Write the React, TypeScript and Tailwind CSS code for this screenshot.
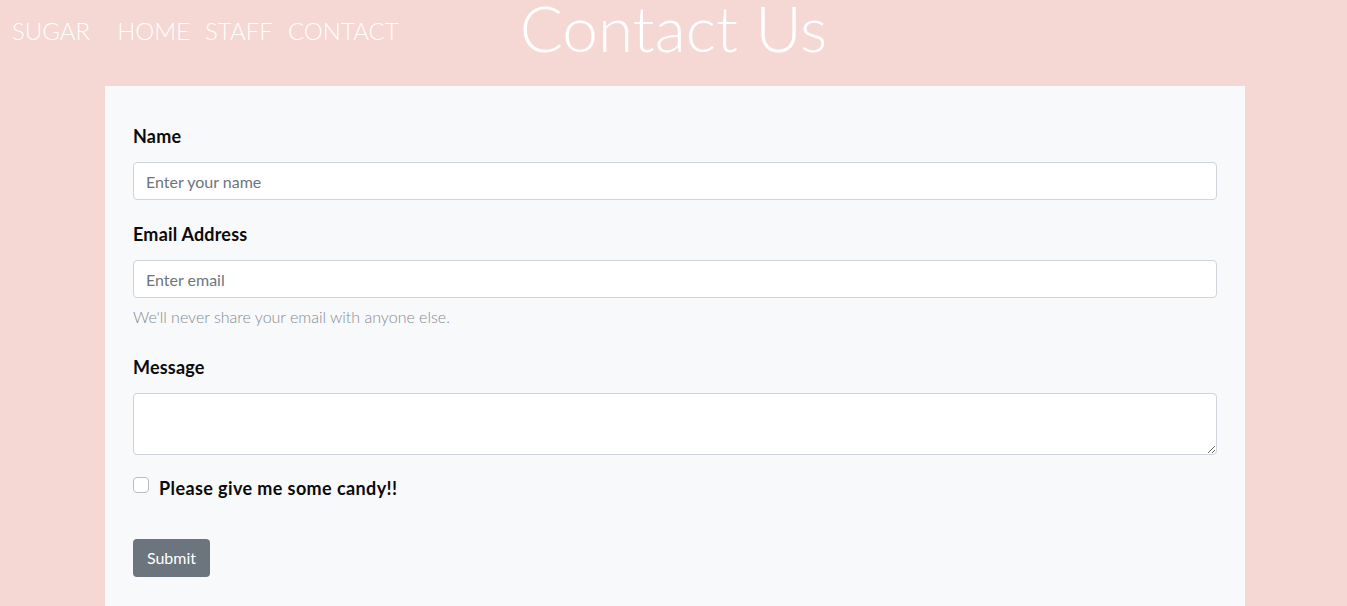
import React from 'react'

const navLinks = ["HOME", "STAFF", "CONTACT"]

const App = () => {
    return (
        <div className="min-h-screen bg-[#f5d7d4] font-['Lato','Noto_Sans',sans-serif]">
            {/* header */}
            <div className="grid h-[86px] grid-cols-[1fr_auto_1fr]">
                <div className="flex items-start gap-[15px] pl-3 pt-[15px] text-[24px] font-light leading-[32px] text-white">
                    <span className="mr-3">SUGAR</span>
                    {navLinks.map((link) => (
                        <a key={link} href="#">{link}</a>
                    ))}
                </div>
                <h1 className="text-[64px] font-light leading-[56px] text-white">Contact Us</h1>
                <div></div>
            </div>

            {/* form card */}
            <div className="ml-[105px] w-[1140px] bg-[#f8f9fa] px-7 pt-[38px] pb-10">
                <form className="flex flex-col">
                    <label className="mb-[14px] text-[18px] font-bold leading-6 tracking-[0.2px] text-[#0b0b0b]">Name</label>
                    <input
                        type="text"
                        placeholder="Enter your name"
                        className="h-[38px] w-full rounded border border-[#ced4da] bg-white px-3 text-[16px] text-[#212529] placeholder:text-[#6c757d] outline-none"
                    />

                    <label className="mt-[22px] mb-[14px] text-[18px] font-bold leading-6 tracking-[0.2px] text-[#0b0b0b]">Email Address</label>
                    <input
                        type="email"
                        placeholder="Enter email"
                        className="h-[38px] w-full rounded border border-[#ced4da] bg-white px-3 text-[16px] text-[#212529] placeholder:text-[#6c757d] outline-none"
                    />
                    <p className="mt-[8px] text-[16px] font-light leading-[21px] text-[#858b92]">We'll never share your email with anyone else.</p>

                    <label className="mt-[28px] mb-[14px] text-[18px] font-bold leading-6 tracking-[0.2px] text-[#0b0b0b]">Message</label>
                    <textarea
                        rows={2}
                        className="h-[62px] w-full rounded border border-[#ced4da] bg-white px-3 py-1.5 text-[16px] outline-none"
                    />

                    <div className="mt-[22px] flex items-start gap-[10px]">
                        <input type="checkbox" className="mt-0 h-4 w-4 appearance-none rounded-[4px] border border-[#b9bec3] bg-white" />
                        <span className="-mt-[1px] text-[18px] font-bold leading-6 tracking-[0.4px] text-[#0b0b0b]">Please give me some candy!!</span>
                    </div>

                    <div className="mt-[39px]">
                        <button type="button" className="h-[38px] w-[77px] rounded bg-[#6c757d] text-[16px] text-white">Submit</button>
                    </div>
                </form>
            </div>
        </div>
    )
}

export default App
